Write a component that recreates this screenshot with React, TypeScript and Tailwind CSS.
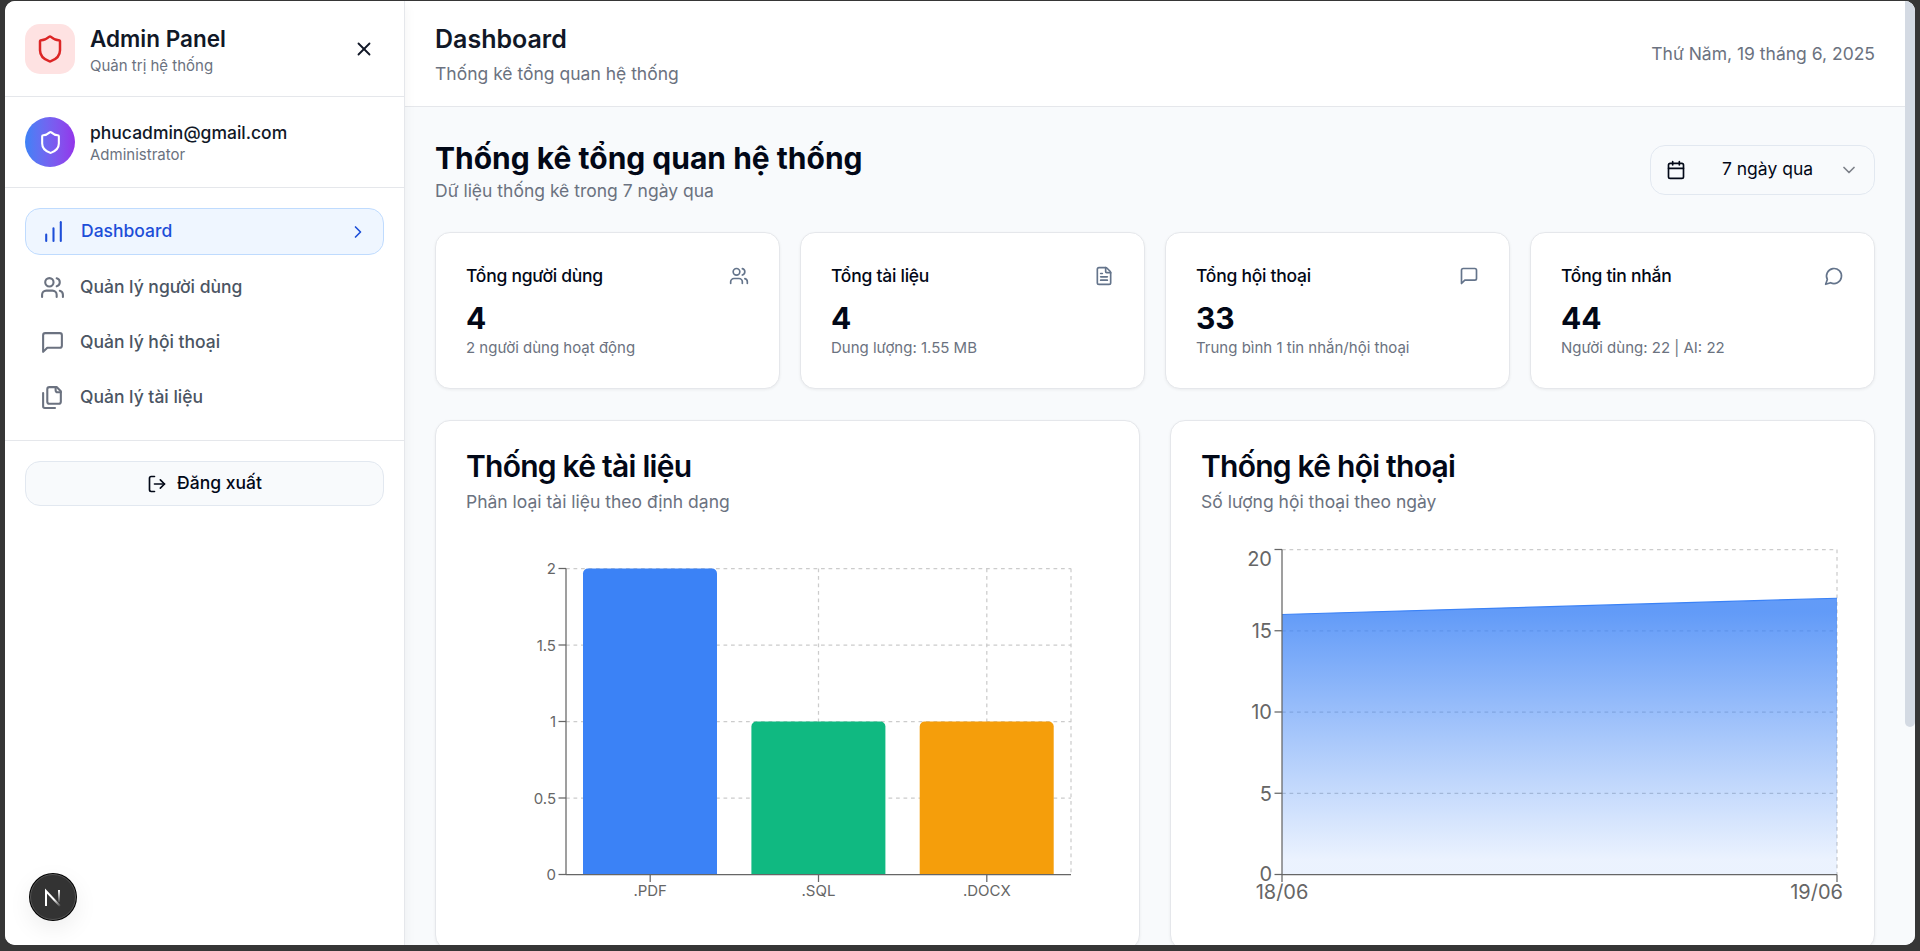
import { Shield, X, ChartNoAxesColumnIncreasing, ChevronRight, ChevronDown, Users, FileText, LogOut, Calendar } from "lucide-react";

const muted = "text-[#6b7280]";

type IconProps = { size?: number; className?: string; strokeWidth?: number };

function Base({ size = 24, className, strokeWidth = 2, children }: IconProps & { children: React.ReactNode }) {
  return (
    <svg width={size} height={size} viewBox="0 0 24 24" fill="none" stroke="currentColor" strokeWidth={strokeWidth} strokeLinecap="round" strokeLinejoin="round" className={className}>
      {children}
    </svg>
  );
}

function MessageSquareOld(p: IconProps) {
  return (
    <Base {...p}>
      <path d="M21 15a2 2 0 0 1-2 2H7l-4 4V5a2 2 0 0 1 2-2h14a2 2 0 0 1 2 2z" />
    </Base>
  );
}

function MessageCircleOld(p: IconProps) {
  return (
    <Base {...p}>
      <path d="M7.9 20A9 9 0 1 0 4 16.1L2 22Z" />
    </Base>
  );
}

function FilesOld(p: IconProps) {
  return (
    <Base {...p}>
      <path d="M20 7h-3a2 2 0 0 1-2-2V2" />
      <path d="M9 18a2 2 0 0 1-2-2V4a2 2 0 0 1 2-2h7l4 4v10a2 2 0 0 1-2 2Z" />
      <path d="M3 7.6v12.8A1.6 1.6 0 0 0 4.6 22h9.8" />
    </Base>
  );
}

function NavItem({ icon: Icon, label }: { icon: React.ComponentType<IconProps>; label: string }) {
  return (
    <div className="flex h-[45px] items-center gap-[15px] px-[15px] text-[17.5px] font-medium text-[#4b5563]">
      <Icon size={25} className="shrink-0 text-[#6b7280]" />
      <span>{label}</span>
    </div>
  );
}

function StatCard({ title, value, desc, icon: Icon }: { title: string; value: string; desc: string; icon: React.ComponentType<IconProps> }) {
  return (
    <div className="rounded-[15px] border border-[#e5e7eb] bg-white p-[30px] shadow-[0_1px_3px_rgba(0,0,0,0.06)]">
      <div className="flex items-center justify-between pb-[10px]">
        <span className="text-[17.5px] leading-[25px] font-medium tracking-[-0.25px] text-[#020817]">{title}</span>
        <Icon size={20} className="text-[#64748b]" />
      </div>
      <div className="text-[30px] leading-[40px] font-bold text-[#020817]">{value}</div>
      <div className={`text-[15px] leading-[20px] ${muted}`}>{desc}</div>
    </div>
  );
}

function ChartCard({ title, sub, children }: { title: string; sub: string; children: React.ReactNode }) {
  return (
    <div className="rounded-[15px] border border-[#e5e7eb] bg-white shadow-[0_1px_3px_rgba(0,0,0,0.06)]">
      <div className="flex flex-col gap-[7.5px] p-[30px]">
        <div className="text-[30px] leading-[30px] font-semibold tracking-[-0.75px] text-[#020817]">{title}</div>
        <div className={`text-[17.5px] leading-[25px] ${muted}`}>{sub}</div>
      </div>
      <div className="px-[30px] pb-[30px]">{children}</div>
    </div>
  );
}

function BarChartSvg() {
  const dash = "3.75 3.75";
  const ys = [
    { y: 568, t: "2" },
    { y: 644.5, t: "1.5" },
    { y: 721, t: "1" },
    { y: 797.5, t: "0.5" },
    { y: 874, t: "0" },
  ];
  const bars = [
    { x: 583, h: 568, c: "#3b82f6", cx: 650.2, l: ".PDF" },
    { x: 751.4, h: 721, c: "#10b981", cx: 818.5, l: ".SQL" },
    { x: 919.7, h: 721, c: "#f59e0b", cx: 986.8, l: ".DOCX" },
  ];
  return (
    <svg viewBox="466 543.5 643 375" className="block h-[375px] w-[643px]" fontFamily="Inter, sans-serif">
      {ys.slice(0, 4).map((r) => (
        <line key={r.t} x1={566} x2={1071} y1={r.y} y2={r.y} stroke="#ccc" strokeWidth={1.25} strokeDasharray={dash} />
      ))}
      {[650.2, 818.5, 986.8, 1071].map((x) => (
        <line key={x} x1={x} x2={x} y1={568} y2={874} stroke="#ccc" strokeWidth={1.25} strokeDasharray={dash} />
      ))}
      {bars.map((b) => (
        <path key={b.l} d={`M${b.x} 874V${b.h + 5}a5 5 0 0 1 5 -5h124a5 5 0 0 1 5 5V874z`} fill={b.c} />
      ))}
      <line x1={566} x2={566} y1={568} y2={874} stroke="#666" strokeWidth={1.25} />
      <line x1={566} x2={1071} y1={874} y2={874} stroke="#666" strokeWidth={1.25} />
      {ys.map((r) => (
        <g key={r.t}>
          <line x1={558.5} x2={566} y1={r.y} y2={r.y} stroke="#666" strokeWidth={1.25} />
          <text x={556} y={r.y + 5.5} textAnchor="end" fontSize={15} fill="#666">{r.t}</text>
        </g>
      ))}
      {bars.map((b) => (
        <g key={b.l}>
          <line x1={b.cx} x2={b.cx} y1={874} y2={881.5} stroke="#666" strokeWidth={1.25} />
          <text x={b.cx} y={895} textAnchor="middle" fontSize={15} fill="#666">{b.l}</text>
        </g>
      ))}
    </svg>
  );
}

function AreaChartSvg() {
  const dash = "3.75 3.75";
  const ys = [
    { y: 549, t: "20", ty: 565 },
    { y: 630.25, t: "15", ty: 637.5 },
    { y: 711.5, t: "10", ty: 718.7 },
    { y: 792.75, t: "5", ty: 800 },
    { y: 874, t: "0", ty: 880 },
  ];
  return (
    <svg viewBox="1201 543.5 643 375" className="block h-[375px] w-[643px] overflow-visible" fontFamily="Inter, sans-serif">
      <defs>
        <linearGradient id="areaFill" x1="0" y1="0" x2="0" y2="1">
          <stop offset="5%" stopColor="#3b82f6" stopOpacity={0.8} />
          <stop offset="95%" stopColor="#3b82f6" stopOpacity={0.1} />
        </linearGradient>
      </defs>
      {ys.slice(0, 4).map((r) => (
        <line key={r.t} x1={1282} x2={1837} y1={r.y} y2={r.y} stroke="#ccc" strokeWidth={1.25} strokeDasharray={dash} />
      ))}
      <line x1={1837} x2={1837} y1={549} y2={874} stroke="#ccc" strokeWidth={1.25} strokeDasharray={dash} />
      <path d="M1282 614L1837 597.75V874H1282z" fill="url(#areaFill)" />
      <path d="M1282 614L1837 597.75" fill="none" stroke="#3b82f6" strokeWidth={1.25} />
      <line x1={1282} x2={1282} y1={549} y2={874} stroke="#666" strokeWidth={1.25} />
      <line x1={1282} x2={1837} y1={874} y2={874} stroke="#666" strokeWidth={1.25} />
      {ys.map((r) => (
        <g key={r.t}>
          <line x1={1274.5} x2={1282} y1={r.y} y2={r.y} stroke="#666" strokeWidth={1.25} />
          <text x={1272} y={r.ty} textAnchor="end" fontSize={20} fill="#666">{r.t}</text>
        </g>
      ))}
      <line x1={1282} x2={1282} y1={874} y2={881.5} stroke="#666" strokeWidth={1.25} />
      <line x1={1837} x2={1837} y1={874} y2={881.5} stroke="#666" strokeWidth={1.25} />
      <text x={1282} y={898} textAnchor="middle" fontSize={20} fill="#666">18/06</text>
      <text x={1843} y={898} textAnchor="end" fontSize={20} fill="#666">19/06</text>
    </svg>
  );
}

export default function App() {
  return (
    <div className="relative h-[951px] overflow-hidden bg-[#363636] pt-px pr-[5px] pb-[6px] pl-[5px] [font-family:Inter,sans-serif]">
      <div className="flex h-full overflow-hidden rounded-[10px] bg-white">
        <aside className="relative z-10 flex w-[400px] shrink-0 flex-col border-r border-[#e5e7eb] bg-white shadow-[0_4px_12px_rgba(0,0,0,0.05)]">
          <div className="flex h-[96px] shrink-0 items-center justify-between border-b border-[#e5e7eb] px-[20px]">
            <div className="flex items-center gap-[15px]">
              <div className="flex h-[50px] w-[50px] items-center justify-center rounded-[15px] bg-[#fee2e2]">
                <Shield size={30} className="text-[#dc2626]" />
              </div>
              <div>
                <div className="text-[22.5px] leading-[35px] font-semibold text-[#111827]">Admin Panel</div>
                <div className={`text-[15px] leading-[20px] ${muted}`}>Quản trị hệ thống</div>
              </div>
            </div>
            <X size={22} className="mr-[9px] text-[#111827]" />
          </div>
          <div className="flex h-[91px] shrink-0 items-center gap-[15px] border-b border-[#e5e7eb] px-[20px]">
            <div className="flex h-[50px] w-[50px] items-center justify-center rounded-full bg-gradient-to-r from-[#3b82f6] to-[#9333ea]">
              <Shield size={25} className="text-white" />
            </div>
            <div>
              <div className="text-[17.5px] leading-[25px] font-medium text-[#111827]">phucadmin@gmail.com</div>
              <div className={`text-[15px] leading-[20px] ${muted}`}>Administrator</div>
            </div>
          </div>
          <nav className="flex flex-col gap-[10px] border-b border-[#e5e7eb] p-[20px]">
            <div className="flex h-[47px] items-center justify-between rounded-[15px] border border-[#bfdbfe] bg-[#eff6ff] px-[15px] text-[17.5px] font-medium text-[#1d4ed8]">
              <span className="flex items-center gap-[15px]">
                <ChartNoAxesColumnIncreasing size={25} />
                Dashboard
              </span>
              <ChevronRight size={20} />
            </div>
            <NavItem icon={Users} label="Quản lý người dùng" />
            <NavItem icon={MessageSquareOld} label="Quản lý hội thoại" />
            <NavItem icon={FilesOld} label="Quản lý tài liệu" />
          </nav>
          <div className="p-[20px]">
            <div className="flex h-[45px] items-center justify-center gap-[10px] rounded-[15px] border border-[#e2e8f0] bg-[#f8fafc] text-[17.5px] font-medium text-[#020817]">
              <LogOut size={20} />
              Đăng xuất
            </div>
          </div>
        </aside>

        <div className="flex min-w-0 flex-1 flex-col">
          <header className="flex h-[106px] shrink-0 items-center justify-between border-b border-[#e5e7eb] bg-white px-[30px]">
            <div>
              <div className="text-[25px] leading-[35px] font-semibold text-[#111827]">Dashboard</div>
              <div className={`mt-[4px] text-[17.5px] leading-[25px] ${muted}`}>Thống kê tổng quan hệ thống</div>
            </div>
            <div className={`text-[17.5px] leading-[25px] ${muted}`}>Thứ Năm, 19 tháng 6, 2025</div>
          </header>
          <main className="min-h-0 flex-1 overflow-hidden bg-[#f8fafc] px-[30px] pt-[31px]">
            <div className="mb-[29px] flex items-center justify-between">
              <div>
                <div className="text-[30px] leading-[40px] font-bold text-[#020817]">Thống kê tổng quan hệ thống</div>
                <div className={`text-[17.5px] leading-[25px] ${muted}`}>Dữ liệu thống kê trong 7 ngày qua</div>
              </div>
              <div className="mb-[2px] flex h-[50px] w-[225px] items-center justify-between rounded-[15px] border border-[#e2e8f0] px-[15px] text-[17.5px] text-[#020817]">
                <Calendar size={20} />
                <span className="ml-[10px]">7 ngày qua</span>
                <ChevronDown size={20} className="text-[#020817] opacity-50" />
              </div>
            </div>
            <div className="mb-[31px] grid grid-cols-4 gap-[20px]">
              <StatCard title="Tổng người dùng" value="4" desc="2 người dùng hoạt động" icon={Users} />
              <StatCard title="Tổng tài liệu" value="4" desc="Dung lượng: 1.55 MB" icon={FileText} />
              <StatCard title="Tổng hội thoại" value="33" desc="Trung bình 1 tin nhắn/hội thoại" icon={MessageSquareOld} />
              <StatCard title="Tổng tin nhắn" value="44" desc="Người dùng: 22 | AI: 22" icon={MessageCircleOld} />
            </div>
            <div className="grid grid-cols-2 gap-[30px]">
              <ChartCard title="Thống kê tài liệu" sub="Phân loại tài liệu theo định dạng">
                <BarChartSvg />
              </ChartCard>
              <ChartCard title="Thống kê hội thoại" sub="Số lượng hội thoại theo ngày">
                <AreaChartSvg />
              </ChartCard>
            </div>
          </main>
        </div>
        <div className="w-[10px] shrink-0 bg-[#f8fafc]">
          <div className="h-[726px] rounded-b-[5px] bg-[#d4dae3]" />
        </div>
      </div>

      <div className="absolute top-[874px] left-[30px] z-20 flex h-[46px] w-[46px] items-center justify-center rounded-full border border-[#555] bg-[#333] shadow-[0_8px_24px_rgba(0,0,0,0.08)] ring-1 ring-black">
        <svg width="18" height="18" viewBox="0 0 18 18" fill="none" className="overflow-visible">
          <defs>
            <linearGradient id="nGrad" gradientUnits="userSpaceOnUse" x1="2" y1="3" x2="16" y2="18">
              <stop offset="0.55" stopColor="#fff" />
              <stop offset="1" stopColor="#fff" stopOpacity={0.1} />
            </linearGradient>
            <linearGradient id="nGrad2" x1="0" y1="0" x2="0" y2="1">
              <stop offset="0" stopColor="#fff" />
              <stop offset="1" stopColor="#fff" stopOpacity={0.1} />
            </linearGradient>
          </defs>
          <path d="M2 18V3L16 18" stroke="url(#nGrad)" strokeWidth="2" />
          <rect x="14" y="2" width="2" height="12" fill="url(#nGrad2)" />
        </svg>
      </div>
    </div>
  );
}
